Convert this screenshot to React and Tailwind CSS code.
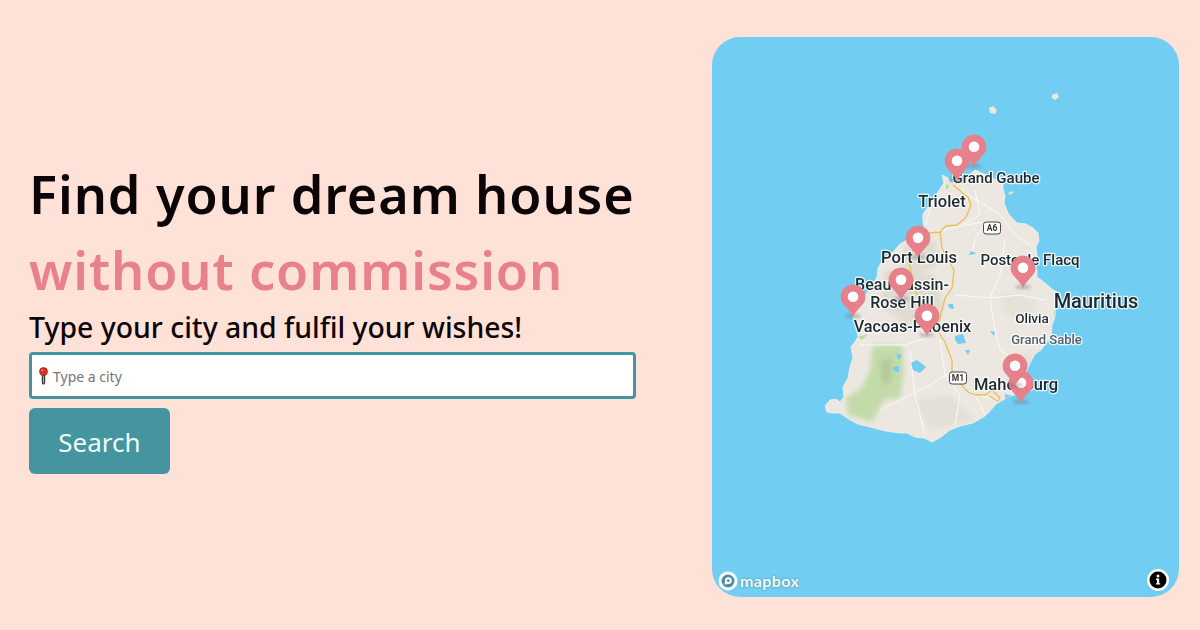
const PINS = [[974,147],[957,161],[918,238],[1023,268],[901,280],[853,297],[927,316],[1021,383],[1015,366]];

const ISLAND = "M942 175 L948 178 L950 183 L958 181 L968 176 L975 170 L984 174 L992 178 L1003 183 L1003 189 L1005 196 L1004 203 L1008 213 L1013 219 L1017 223 L1026 224 L1033 228 L1038 233 L1039 241 L1036 247 L1037 256 L1035 264 L1037 271 L1037 277 L1045 283 L1052 289 L1060 294 L1061 297 L1056 304 L1055 317 L1052 325 L1051 337 L1046 343 L1041 350 L1035 354 L1031 361 L1027 370 L1024 380 L1019 394 L1010 396 L1003 400 L996 404 L990 411 L985 416 L973 423 L960 426 L950 430 L941 437 L932 442 L924 438 L915 437 L907 433 L900 433 L885 431 L870 427 L858 424 L850 420 L840 413 L833 413 L827 412 L825 406 L830 400 L836 399 L840 402 L844 397 L843 387 L848 378 L850 367 L853 358 L851 347 L855 342 L858 337 L856 325 L853 317 L858 303 L867 293 L873 285 L877 277 L878 268 L884 258 L893 252 L900 244 L907 240 L915 236 L925 232 L923 222 L923 214 L928 207 L933 200 L938 192 L944 183 Z";

function Label({ x, y, size = 15, color = "#1f2a30", children }) {
  return (
    <text x={x} y={y} fontSize={size} fill={color} stroke="#ffffff" strokeOpacity="0.8" strokeWidth="2.5" strokeLinejoin="round" paintOrder="stroke" textAnchor="middle" fontFamily="Roboto, sans-serif" fontWeight="500">{children}</text>
  );
}

function Shield({ x, y, children }) {
  return (
    <g>
      <rect x={x - 8.5} y={y - 6} width="17" height="12" rx="2.5" fill="#fff" stroke="#333" strokeWidth="0.9" />
      <text x={x} y={y + 3.3} fontSize="8.5" fontWeight="700" textAnchor="middle" fill="#333" fontFamily="Roboto, sans-serif">{children}</text>
    </g>
  );
}

function Pin({ x, y }) {
  return (
    <g>
      <ellipse cx={x} cy={y + 19} rx="8" ry="2.6" fill="#5d6c70" opacity="0.35" filter="url(#soft2)" />
      <path d={`M${x} ${y + 20} Q${x - 1.5} ${y + 16} ${x - 10.8} ${y + 6} A12.4 12.4 0 1 1 ${x + 10.8} ${y + 6} Q${x + 1.5} ${y + 16} ${x} ${y + 20} Z`} fill="#e6808a" />
      <circle cx={x} cy={y - 0.3} r="5.3" fill="#fff" />
    </g>
  );
}

function MapArt() {
  return (
    <svg viewBox="712 37 467 560" className="block h-full w-full">
      <defs>
        <filter id="soft"><feGaussianBlur stdDeviation="0.6" /></filter>
        <filter id="soft2"><feGaussianBlur stdDeviation="1.6" /></filter>
        <filter id="soft3"><feGaussianBlur stdDeviation="2.4" /></filter>
        <filter id="tiny"><feGaussianBlur stdDeviation="0.3" /></filter>
        <clipPath id="land"><path d={ISLAND} /></clipPath>
      </defs>
      <rect x="712" y="37" width="467" height="560" fill="#72cdf3" />
      <g filter="url(#soft)">
        <path d={ISLAND} fill="#ece8e1" stroke="#f4f1ea" strokeWidth="0.8" />
        <path d="M989 108 L993 106 L997 110 L995 114 L990 113 Z" fill="#ece8e1" />
        <path d="M1052 95 L1057 93 L1059 97 L1055 100 L1052 98 Z" fill="#ece8e1" />
        <path d="M1008 193 L1012 191 L1014 193 L1010 195 Z" fill="#cfe9d8" />
      </g>
      <g clipPath="url(#land)">
        <g filter="url(#soft3)">
          <path d="M873 345 L902 345 L904 372 L900 398 L884 400 L872 422 L848 415 L846 398 L862 388 L870 370 Z" fill="#c2dba8" />
          <path d="M880 362 L892 358 L890 385 L882 382 Z" fill="#b4c99a" />
          <path d="M905 246 L935 240 L940 262 L920 275 L900 270 Z" fill="#e0dcd2" />
          <path d="M885 270 L935 275 L945 310 L905 325 L880 305 Z" fill="#dfdbd1" />
          <path d="M1015 358 L1032 352 L1025 385 L1005 390 Z" fill="#e0dcd2" />
          <path d="M915 400 L950 395 L975 420 L930 430 Z" fill="#e4e0d7" />
          <path d="M1000 290 L1040 300 L1030 320 L1005 315 Z" fill="#e5e2d9" />
        </g>
        <g filter="url(#tiny)" fill="none" stroke="#fbfaf7" strokeWidth="1">
          <path d="M960 190 L985 205 L1000 215 L1015 235 L1030 245" />
          <path d="M935 232 L965 225 L985 222 L975 240 L972 255" />
          <path d="M955 295 L990 298 L1020 295 L1045 300" />
          <path d="M990 300 L995 330 L1000 350 L1015 360" />
          <path d="M940 340 L945 375 L960 395 L955 425" />
          <path d="M1000 400 L975 395 L985 415" />
          <path d="M910 350 L915 395 L925 435" />
          <path d="M860 345 L905 345 L935 335" />
          <path d="M880 410 L930 385 L950 372" />
          <path d="M940 180 L930 210 L926 225" />
          <path d="M975 190 L980 215 L962 225" />
          <path d="M1005 240 L1000 275 L990 298" />
        </g>
        <g filter="url(#tiny)" fill="none" stroke="#e9c04f" strokeWidth="1.3" strokeLinejoin="round">
          <path d="M953 185 L968 197 L971 205 L966 217 L957 225 L946 226 L940 232 L930 233 L920 238 L908 258 L913 280 L917 295" />
          <path d="M940 232 L942 248 L954 270 L952 288 L945 298 L937 330 L945 342 L952 360 L952 375 L968 392 L975 395 L985 395 L992 390 L1000 398 L998 401 L989 396" />
        </g>
        <g filter="url(#tiny)" fill="#72cdf3">
          <path d="M948 304 L953 304 L954 309 L949 308 Z" />
          <path d="M955 336 L963 334 L966 343 L958 344 L955 340 Z" />
          <path d="M911 363 L917 360 L926 367 L920 373 L913 370 Z" />
          <path d="M896 354 L902 355 L899 360 Z" />
          <path d="M893 367 L899 366 L899 372 L894 371 Z" />
          <path d="M965 350 L970 350 L968 355 Z" />
          <path d="M990 331 L995 332 L994 336 Z" />
          <path d="M972 251 L976 254 L968 255 Z" />
          <path d="M1005 394 L1012 396 L1020 400 L1015 402 L1005 399 Z" />
        </g>
        <path d="M1054 312 L1058 306 L1055 320 Z" fill="#b8dd8f" filter="url(#tiny)" />
        <path d="M858 337 L868 334 L862 340 Z" fill="#b8dd8f" filter="url(#tiny)" />
        <path d="M946 184 L950 186 L946 190 Z" fill="#b8dd8f" filter="url(#tiny)" />
      </g>
      <g filter="url(#tiny)">
        <Shield x={992} y={228}>A6</Shield>
        <Shield x={958} y={378}>M1</Shield>
        <Label x={996} y={183} size={15}>Grand Gaube</Label>
        <Label x={942} y={207} size={16.5}>Triolet</Label>
        <Label x={919} y={263} size={16.5}>Port Louis</Label>
        <Label x={1030} y={265} size={15}>Poste de Flacq</Label>
        <Label x={902} y={290} size={16}>Beau Bassin-</Label>
        <Label x={902} y={308} size={16}>Rose Hill</Label>
        <Label x={912.5} y={332} size={16.2}>Vacoas-Phoenix</Label>
        <Label x={1096} y={308} size={20}>Mauritius</Label>
        <Label x={1032} y={323} size={13.5}>Olivia</Label>
        <Label x={1046.5} y={344} size={13} color="#55606a">Grand Sable</Label>
        <Label x={1016} y={390} size={16.5}>Mahebourg</Label>
        {PINS.map(([x, y]) => <Pin key={`${x}-${y}`} x={x} y={y} />)}
      </g>
    </svg>
  );
}

export default function App() {
  return (
    <div className="flex h-[630px] w-[1200px] overflow-hidden bg-[#ffe2d7] font-['Noto_Sans',sans-serif] text-[#0c0507]">
      <div className="flex w-[712px] flex-col pl-[29px] pr-[76px] pt-[159px]">
        <h1 className="text-[52.2px] font-semibold leading-[70px] tracking-[0.9px] whitespace-nowrap">Find your dream house</h1>
        <h2 className="mt-[6px] text-[52.2px] font-semibold leading-[70px] tracking-[0.9px] whitespace-nowrap text-[#e8818a]">without commission</h2>
        <p className="mt-[3px] text-[28.4px] font-medium leading-[38px] whitespace-nowrap">Type your city and fulfil your wishes!</p>
        <div className="mt-[6px] flex h-[47px] w-[607px] items-center gap-[4px] rounded-[4px] border-[3px] border-[#44959f] bg-white pl-[6px] pt-[2px]">
          <svg width="11" height="18" viewBox="0 0 11 18" className="shrink-0 -translate-y-[1px]">
            <rect x="3.8" y="7" width="3.4" height="10.5" rx="1.4" fill="#3f3f3f" />
            <rect x="5" y="8.5" width="1" height="7.5" fill="#a8a8a8" />
            <circle cx="5.5" cy="4.6" r="4" fill="#e0301e" stroke="#5a1a10" strokeWidth="0.6" />
            <circle cx="4.2" cy="3.3" r="1" fill="#ff8a70" />
          </svg>
          <span className="text-[14px] text-[#757575]">Type a city</span>
        </div>
        <button className="mt-[9px] flex h-[66px] w-[141px] items-center justify-center rounded-[6px] bg-[#44959f] pt-[3px] text-[26px] text-[#eefcfc]">Search</button>
      </div>
      <div className="relative mt-[37px] h-[560px] w-[467px] overflow-hidden rounded-[28px]">
        <MapArt />
        <div className="absolute bottom-[6px] left-[6px] flex items-center gap-[2px]">
          <svg width="20" height="20" viewBox="0 0 20 20">
            <circle cx="10" cy="10" r="9.5" fill="#fff" opacity="0.95" />
            <circle cx="10" cy="10" r="6.5" fill="#4a8fa8" />
            <path d="M6.5 13.5 L7 9.5 A3.4 3.4 0 1 1 10.5 13 Z" fill="#fff" />
            <circle cx="10.3" cy="9.7" r="1.4" fill="#4a8fa8" />
          </svg>
          <span className="text-[16px] font-bold leading-none tracking-[0.4px] text-[#f4fbfd] font-['Lato',sans-serif] [text-shadow:0_0_2px_#3f7a90]">mapbox</span>
        </div>
        <div className="absolute bottom-[6px] right-[10px] flex h-[22px] w-[22px] items-center justify-center rounded-full bg-white">
          <svg width="18" height="18" viewBox="0 0 18 18">
            <circle cx="9" cy="9" r="8.5" fill="#000" />
            <circle cx="9" cy="5" r="1.5" fill="#fff" />
            <path d="M7 7.6 H10.2 V12.2 H11.2 V13.6 H7 V12.2 H8 V9 H7 Z" fill="#fff" />
          </svg>
        </div>
      </div>
    </div>
  );
}
